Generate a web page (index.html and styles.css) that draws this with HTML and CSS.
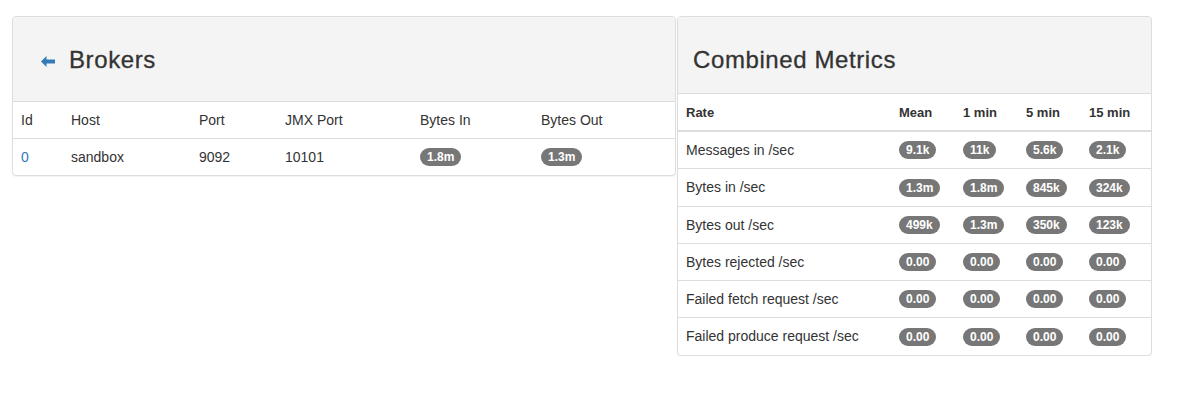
FILE: index.html
```html
<!DOCTYPE html>
<html>
<head>
<meta charset="utf-8">
<link rel="stylesheet" href="styles.css">
</head>
<body>
<div class="page">
  <div class="panel panel-brokers">
    <div class="panel-heading heading-tall">
      <h3 class="title">
        <a class="back" href="#"><svg width="14" height="11" viewBox="0 0 14 11"><path d="M0 5.5 L5.5 0 L5.5 3.5 L14 3.5 L14 7.5 L5.5 7.5 L5.5 11 Z" fill="#337ab7"/></svg></a>
        Brokers
      </h3>
    </div>
    <table class="table brokers">
      <colgroup>
        <col style="width:50px"><col style="width:128px"><col style="width:86px"><col style="width:135px"><col style="width:121px"><col>
      </colgroup>
      <thead>
        <tr><th>Id</th><th>Host</th><th>Port</th><th>JMX Port</th><th>Bytes In</th><th>Bytes Out</th></tr>
      </thead>
      <tbody>
        <tr><td><a href="#">0</a></td><td>sandbox</td><td>9092</td><td>10101</td><td><span class="badge">1.8m</span></td><td><span class="badge">1.3m</span></td></tr>
      </tbody>
    </table>
  </div>
  <div class="panel panel-metrics">
    <div class="panel-heading">
      <h3 class="title">Combined Metrics</h3>
    </div>
    <table class="table metrics">
      <colgroup>
        <col style="width:213px"><col style="width:64px"><col style="width:63px"><col style="width:63px"><col>
      </colgroup>
      <thead>
        <tr><th>Rate</th><th>Mean</th><th>1 min</th><th>5 min</th><th>15 min</th></tr>
      </thead>
      <tbody>
        <tr><td>Messages in /sec</td><td><span class="badge">9.1k</span></td><td><span class="badge">11k</span></td><td><span class="badge">5.6k</span></td><td><span class="badge">2.1k</span></td></tr>
        <tr><td>Bytes in /sec</td><td><span class="badge">1.3m</span></td><td><span class="badge">1.8m</span></td><td><span class="badge">845k</span></td><td><span class="badge">324k</span></td></tr>
        <tr><td>Bytes out /sec</td><td><span class="badge">499k</span></td><td><span class="badge">1.3m</span></td><td><span class="badge">350k</span></td><td><span class="badge">123k</span></td></tr>
        <tr><td>Bytes rejected /sec</td><td><span class="badge">0.00</span></td><td><span class="badge">0.00</span></td><td><span class="badge">0.00</span></td><td><span class="badge">0.00</span></td></tr>
        <tr><td>Failed fetch request /sec</td><td><span class="badge">0.00</span></td><td><span class="badge">0.00</span></td><td><span class="badge">0.00</span></td><td><span class="badge">0.00</span></td></tr>
        <tr><td>Failed produce request /sec</td><td><span class="badge">0.00</span></td><td><span class="badge">0.00</span></td><td><span class="badge">0.00</span></td><td><span class="badge">0.00</span></td></tr>
      </tbody>
    </table>
  </div>
</div>
</body>
</html>
```

FILE: styles.css
```css
* { box-sizing: border-box; }
html, body {
  margin: 0;
  padding: 0;
  background: #fff;
  font-family: "Liberation Sans", Arial, sans-serif;
  font-size: 14px;
  line-height: 20px;
  color: #333;
}
.page {
  display: flex;
  align-items: flex-start;
  padding: 16px 0 0 12px;
  gap: 1px;
}
.panel {
  background: #fff;
  border: 1px solid #ddd;
  border-radius: 4px;
  box-shadow: 0 1px 1px rgba(0,0,0,.05);
  overflow: hidden;
}
.panel-brokers { width: 664px; }
.panel-metrics { width: 475px; }
.panel-heading {
  background: #f4f4f4;
  border-bottom: 1px solid #ddd;
  padding: 10px 15px;
}
.heading-tall { padding-bottom: 18px; }
.title {
  margin: 20px 0 10px;
  font-size: 24px;
  font-weight: 500;
  line-height: 26px;
  letter-spacing: 0.6px;
  -webkit-text-stroke: 0.3px #333;
  color: #333;
  display: flex;
  align-items: center;
}
.back {
  display: inline-flex;
  margin: 3px 14px 0 13px;
  -webkit-text-stroke: 0;
}
.back svg { display: block; }
.table {
  width: 100%;
  border-collapse: collapse;
  table-layout: fixed;
}
.table th, .table td {
  padding: 8px;
  text-align: left;
  vertical-align: top;
  line-height: 20px;
  white-space: nowrap;
}
.table tbody td { border-top: 1px solid #ddd; }
.brokers th { font-weight: normal; }
.metrics th { font-weight: bold; font-size: 13px; border-bottom: 2px solid #ddd; padding-top: 9px; padding-bottom: 7px; }
.metrics tbody tr:first-child td { border-top: 0; }
a { color: #337ab7; text-decoration: none; }
.badge {
  display: inline-block;
  min-width: 10px;
  padding: 3px 7px;
  font-size: 12px;
  font-weight: bold;
  line-height: 12px;
  color: #fff;
  text-align: center;
  vertical-align: middle;
  background: #777;
  border-radius: 10px;
  position: relative;
  top: -1px;
}
```
